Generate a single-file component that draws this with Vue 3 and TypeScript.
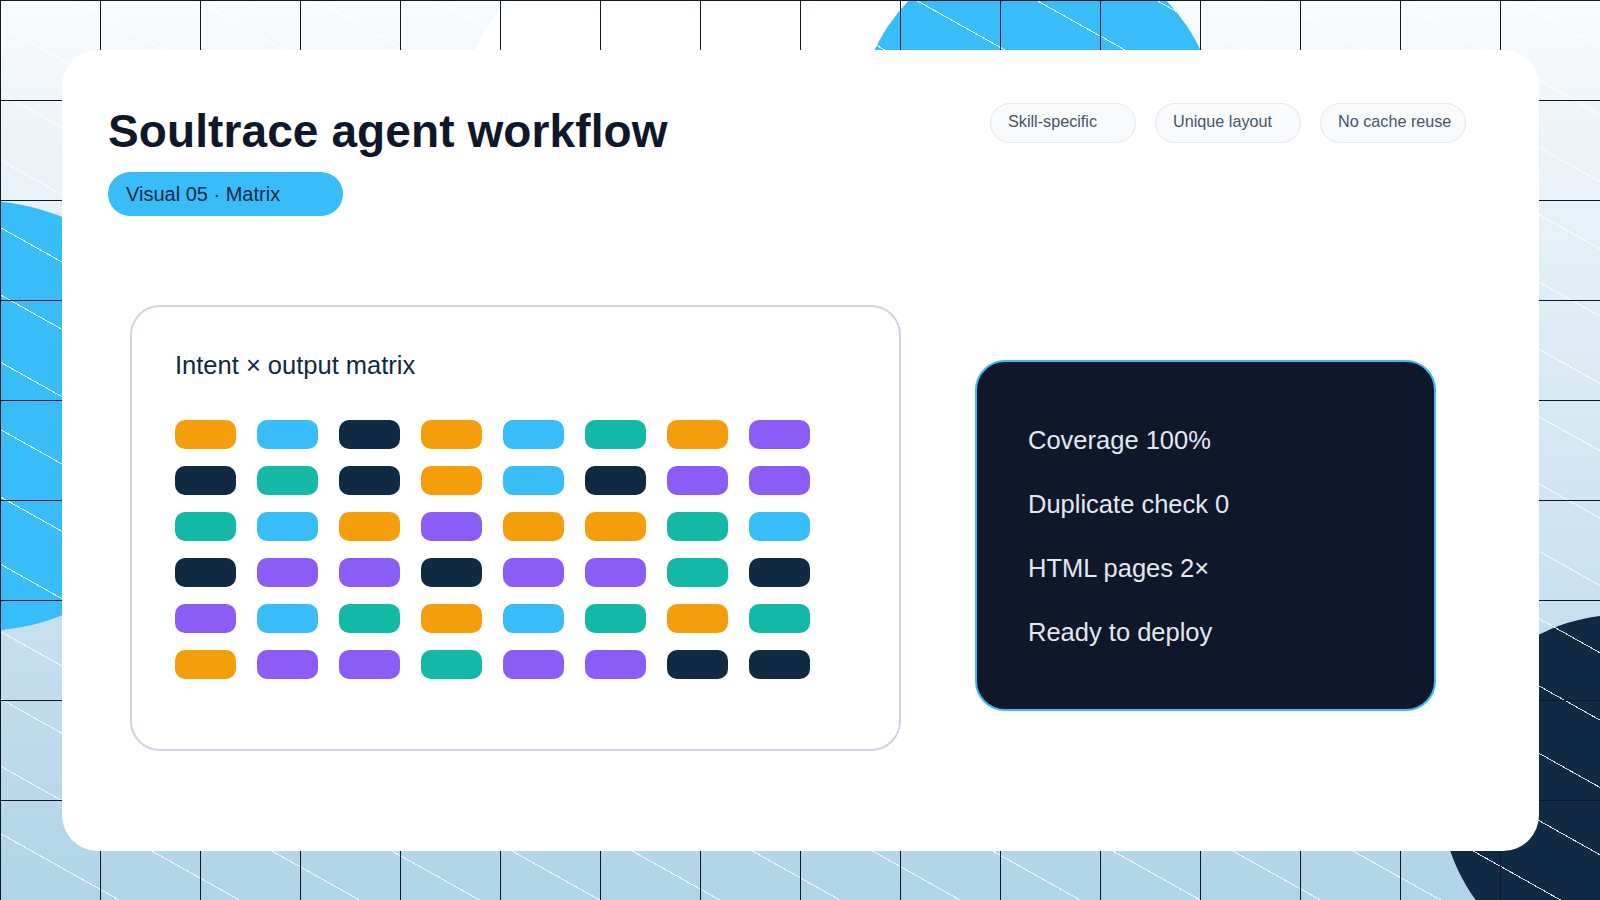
<script setup lang="ts">
type Tone = 'o' | 'b' | 'n' | 't' | 'p'

const chips: string[] = ['Skill-specific', 'Unique layout', 'No cache reuse']
const stats: string[] = ['Coverage 100%', 'Duplicate check 0', 'HTML pages 2×', 'Ready to deploy']
const rows: string[] = ['obnobtop', 'ntnobnpp', 'tbopootb', 'nppnpptn', 'pbtobtot', 'opptppnn']
const cells: Tone[] = rows.join('').split('') as Tone[]
</script>

<template>
  <main class="page">
    <div class="blob blob-white"></div>
    <div class="blob blob-blue"></div>
    <div class="blob blob-left"></div>
    <div class="blob blob-dark"></div>
    <div class="texture"></div>

    <section class="card">
      <header class="head">
        <div class="heading">
          <h1 class="title">Soultrace agent workflow</h1>
          <div class="pill">Visual 05 · Matrix</div>
        </div>
        <ul class="chips">
          <li v-for="c in chips" :key="c" class="chip">{{ c }}</li>
        </ul>
      </header>

      <div class="content">
        <div class="matrix">
          <h2 class="matrix-title">Intent × output matrix</h2>
          <div class="grid">
            <span v-for="(t, i) in cells" :key="i" class="cell" :class="`tone-${t}`"></span>
          </div>
        </div>
        <ul class="stats">
          <li v-for="s in stats" :key="s" class="stat">{{ s }}</li>
        </ul>
      </div>
    </section>
  </main>
</template>

<style>
html,
body {
  margin: 0;
  padding: 0;
}
</style>

<style scoped>
.page {
  position: relative;
  width: 1600px;
  height: 900px;
  box-sizing: border-box;
  padding: 50px 61px 49px 62px;
  overflow: hidden;
  font-family: "Liberation Sans", Arial, sans-serif;
  background: linear-gradient(180deg, #f8fafc 0%, #b0d4e8 100%);
}

.blob {
  position: absolute;
  border-radius: 50%;
}
.blob-white {
  left: 441px;
  top: -112px;
  width: 600px;
  height: 600px;
  background: #ffffff;
}
.blob-blue {
  left: 858px;
  top: -54px;
  width: 359px;
  height: 359px;
  background: #38bdf8;
}
.blob-left {
  left: -234px;
  top: 201px;
  width: 430px;
  height: 430px;
  background: #38bdf8;
}
.blob-dark {
  left: 1441px;
  top: 615px;
  width: 358px;
  height: 358px;
  background: #102a43;
}

.texture {
  position: absolute;
  inset: 0;
  background-image:
    linear-gradient(#0f172a 1px, transparent 1px),
    linear-gradient(90deg, #0f172a 1px, transparent 1px),
    repeating-linear-gradient(29.27deg, transparent 0 57.73px, rgba(255, 255, 255, 0.85) 57.73px 58.73px);
  background-size: 100px 100px, 100px 100px, auto;
}

.card {
  position: relative;
  box-sizing: border-box;
  height: 801px;
  padding: 53px 73px 0 46px;
  border-radius: 36px;
  background: #ffffff;
}

.head {
  display: flex;
  justify-content: space-between;
  align-items: flex-start;
}

.title {
  margin: 0;
  padding-top: 4px;
  font-size: 46px;
  line-height: 48px;
  letter-spacing: 0.1px;
  font-weight: 700;
  color: #0f172a;
}

.pill {
  box-sizing: border-box;
  width: 235px;
  height: 44px;
  margin-top: 17px;
  padding: 0 18px;
  border-radius: 22px;
  background: #38bdf8;
  color: #102a43;
  font-size: 20px;
  line-height: 44px;
}

.chips {
  display: flex;
  gap: 19px;
  margin: 0;
  padding: 0;
  list-style: none;
}

.chip {
  box-sizing: border-box;
  width: 146px;
  height: 40px;
  padding: 0 17px;
  border: 1px solid #e2e8f0;
  border-radius: 20px;
  background: #f8fafc;
  color: #475569;
  font-size: 16.2px;
  line-height: 34px;
  white-space: nowrap;
}

.content {
  display: flex;
  align-items: flex-start;
  gap: 74px;
  margin-top: 89px;
  padding-left: 22px;
}

.matrix {
  box-sizing: border-box;
  width: 771px;
  height: 446px;
  padding: 43px 43px 0;
  border: 2px solid #cbd5e1;
  border-radius: 30px;
  background: #ffffff;
}

.matrix-title {
  margin: 0;
  font-size: 25.5px;
  line-height: 30px;
  font-weight: 400;
  color: #102a43;
}

.grid {
  display: grid;
  grid-template-columns: repeat(8, 61px);
  grid-auto-rows: 29px;
  column-gap: 21px;
  row-gap: 17px;
  margin-top: 40px;
}

.cell {
  border-radius: 10px;
}
.tone-o { background: #f59e0b; }
.tone-b { background: #38bdf8; }
.tone-n { background: #102a43; }
.tone-t { background: #14b8a6; }
.tone-p { background: #8b5cf6; }

.stats {
  box-sizing: border-box;
  display: flex;
  flex-direction: column;
  justify-content: center;
  gap: 34px;
  width: 461px;
  height: 351px;
  margin: 55px 0 0;
  padding: 1px 0 0 51px;
  border: 2px solid #38bdf8;
  border-radius: 30px;
  background: #0f172a;
  list-style: none;
}

.stat {
  color: #e2e8f0;
  font-size: 25.5px;
  line-height: 30px;
}
</style>
